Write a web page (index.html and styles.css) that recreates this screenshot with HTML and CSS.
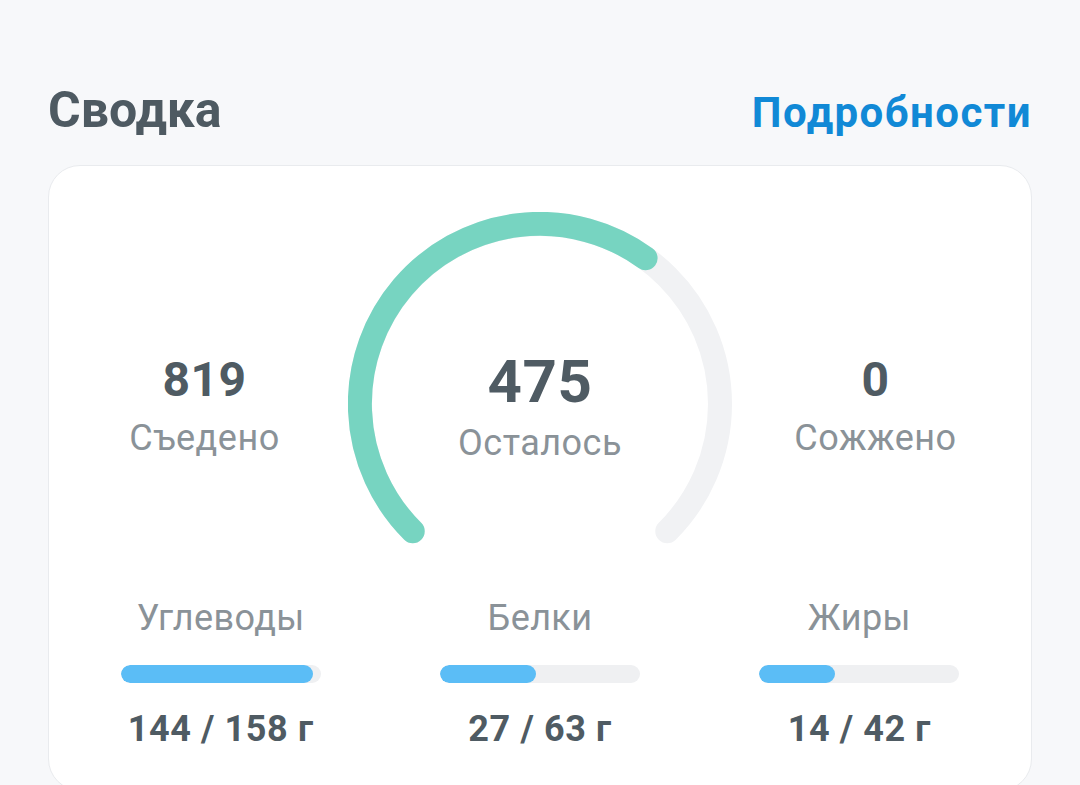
FILE: index.html
```html
<!DOCTYPE html>
<html lang="ru">
<head>
  <meta charset="UTF-8">
  <title>Сводка</title>
  <link rel="stylesheet" href="styles.css">
</head>
<body>
  <div class="header">
    <h1>Сводка</h1>
    <a class="more" href="#">Подробности</a>
  </div>

  <div class="card">
    <div class="gauge-row">
      <div class="stat">
        <div class="stat-num">819</div>
        <div class="stat-label">Съедено</div>
      </div>

      <div class="gauge">
        <svg width="384" height="332" viewBox="0 0 384 332">
          <path class="track" d="M 64.72 319.28 A 180 180 0 1 1 319.28 319.28" />
          <path class="fill" d="M 64.72 319.28 A 180 180 0 0 1 297.6 46.2" />
        </svg>
        <div class="gauge-center">
          <div class="big-num">475</div>
          <div class="stat-label">Осталось</div>
        </div>
      </div>

      <div class="stat">
        <div class="stat-num">0</div>
        <div class="stat-label">Сожжено</div>
      </div>
    </div>

    <div class="macros">
      <div class="macro">
        <div class="macro-name">Углеводы</div>
        <div class="bar"><div class="bar-fill" style="width: 192px"></div></div>
        <div class="macro-val">144 / 158 г</div>
      </div>
      <div class="macro">
        <div class="macro-name">Белки</div>
        <div class="bar"><div class="bar-fill" style="width: 96px"></div></div>
        <div class="macro-val">27 / 63 г</div>
      </div>
      <div class="macro">
        <div class="macro-name">Жиры</div>
        <div class="bar"><div class="bar-fill" style="width: 76px"></div></div>
        <div class="macro-val">14 / 42 г</div>
      </div>
    </div>
  </div>
</body>
</html>
```

FILE: styles.css
```css
body {
  font-family: Roboto, 'Noto Sans', sans-serif;
  background: #f7f8fa;
  color: #4f5b63;
  margin: 0;
  padding: 80px 48px 0 48px;
  overflow: hidden;
}

.header {
  display: flex;
  justify-content: space-between;
  align-items: baseline;
}

h1 {
  margin: 0;
  font-size: 50px;
  line-height: 60px;
  font-weight: 700;
  color: #4e5a62;
}

.more {
  font-size: 42px;
  font-weight: 700;
  color: #1189d6;
  text-decoration: none;
  letter-spacing: 1.5px;
}

.card {
  margin-top: 25px;
  background: #fff;
  border: 1.5px solid #e9ebee;
  border-radius: 32px;
  padding: 46px 12px 40px 12px;
}

.gauge-row {
  display: grid;
  grid-template-columns: 1fr 384px 1fr;
  gap: 8px;
  padding: 0 8px;
}

.stat {
  padding-top: 140px;
  text-align: center;
}

.stat-num {
  font-size: 48px;
  line-height: 56px;
  font-weight: 700;
  letter-spacing: 0.5px;
}

.stat-label {
  margin-top: 9px;
  font-size: 36px;
  line-height: 42px;
  color: #8a9298;
  letter-spacing: 0.5px;
}

.gauge {
  position: relative;
  height: 332px;
}

.gauge svg {
  display: block;
}

.track,
.fill {
  fill: none;
  stroke-width: 24;
  stroke-linecap: round;
}

.track {
  stroke: #f1f2f4;
}

.fill {
  stroke: #77d4c1;
}

.gauge-center {
  position: absolute;
  top: 137px;
  left: 0;
  right: 0;
  text-align: center;
}

.big-num {
  font-size: 60px;
  line-height: 66px;
  font-weight: 700;
  letter-spacing: 0.6px;
}

.gauge-center .stat-label {
  margin-top: 7px;
}

.macros {
  margin-top: 53px;
  display: grid;
  grid-template-columns: repeat(3, 1fr);
}

.macro {
  display: flex;
  flex-direction: column;
  align-items: center;
}

.macro-name {
  font-size: 36px;
  line-height: 42px;
  color: #8a9298;
  letter-spacing: 0.4px;
}

.bar {
  margin-top: 26px;
  width: 200px;
  height: 18px;
  border-radius: 9px;
  background: #eff0f2;
  overflow: hidden;
}

.bar-fill {
  height: 100%;
  border-radius: 9px;
  background: #5bbdf6;
}

.macro-val {
  margin-top: 25px;
  font-size: 36px;
  line-height: 42px;
  font-weight: 700;
  letter-spacing: 0.6px;
}
```
